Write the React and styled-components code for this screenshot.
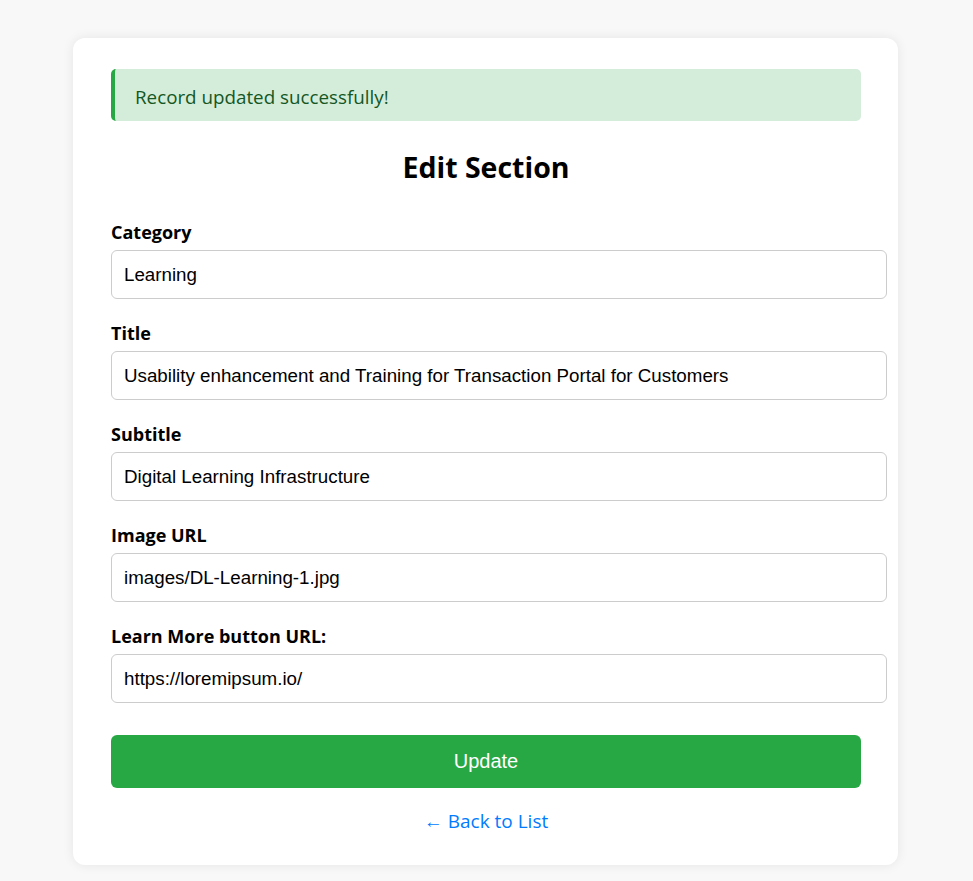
import React from 'react'
import styled, { createGlobalStyle } from 'styled-components'

const GlobalStyle = createGlobalStyle`
  body {
    margin: 0;
    background: #f8f8f8;
    font-family: "Open Sans", "Noto Sans", sans-serif;
  }
`;

const Card = styled.div`
  width: 750px;
  margin: 38px 0 16px 73px;
  padding: 31px 37px 31px 38px;
  background: #fff;
  border-radius: 12px;
  box-shadow: 0 0 12px rgba(0, 0, 0, 0.08);
`;

const Alert = styled.div`
  padding: 16px 20px 12px;
  border-left: 4px solid #28a745;
  border-radius: 5px;
  background: #d4edda;
  color: #155724;
  font-size: 18.8px;
  line-height: 24px;
`;

const Title = styled.h2`
  margin: 28px 0 34px;
  text-align: center;
  font-size: 28.5px;
  font-weight: 700;
  line-height: 36px;
`;

const Form = styled.form`
  display: flex;
  flex-direction: column;
`;

const Field = styled.div`
  display: flex;
  flex-direction: column;
  margin-bottom: 21px;
`;

const Label = styled.label`
  margin-bottom: 5px;
  font-size: 18px;
  font-weight: 700;
  line-height: 26px;
  color: #000;
`;

const Input = styled.input`
  width: 100%;
  height: 23px;
  padding: 12px;
  border: 1px solid #ccc;
  border-radius: 6px;
  font-family: "Liberation Sans", Arial, sans-serif;
  font-size: 18.75px;
  color: #000;
  outline: none;
`;

const Button = styled.button`
  width: 100%;
  height: 53px;
  margin-top: 11px;
  border: none;
  border-radius: 6px;
  background: #28a745;
  color: #fff;
  font-family: "Liberation Sans", Arial, sans-serif;
  font-size: 20px;
  cursor: pointer;
`;

const BackLink = styled.a`
  display: block;
  margin-top: 20px;
  text-align: center;
  color: #007bff;
  font-size: 19px;
  line-height: 26px;
  text-decoration: none;
`;

const fields = [
  { label: 'Category', value: 'Learning' },
  { label: 'Title', value: 'Usability enhancement and Training for Transaction Portal for Customers' },
  { label: 'Subtitle', value: 'Digital Learning Infrastructure' },
  { label: 'Image URL', value: 'images/DL-Learning-1.jpg' },
  { label: 'Learn More button URL:', value: 'https://loremipsum.io/' },
];

export default function App() {
  return (
    <>
      <GlobalStyle />
      <Card>
        <Alert>Record updated successfully!</Alert>
        <Title>Edit Section</Title>
        <Form onSubmit={e => e.preventDefault()}>
          {fields.map(f => (
            <Field key={f.label}>
              <Label>{f.label}</Label>
              <Input defaultValue={f.value} />
            </Field>
          ))}
          <Button type="submit">Update</Button>
        </Form>
        <BackLink href="#">← Back to List</BackLink>
      </Card>
    </>
  );
}
